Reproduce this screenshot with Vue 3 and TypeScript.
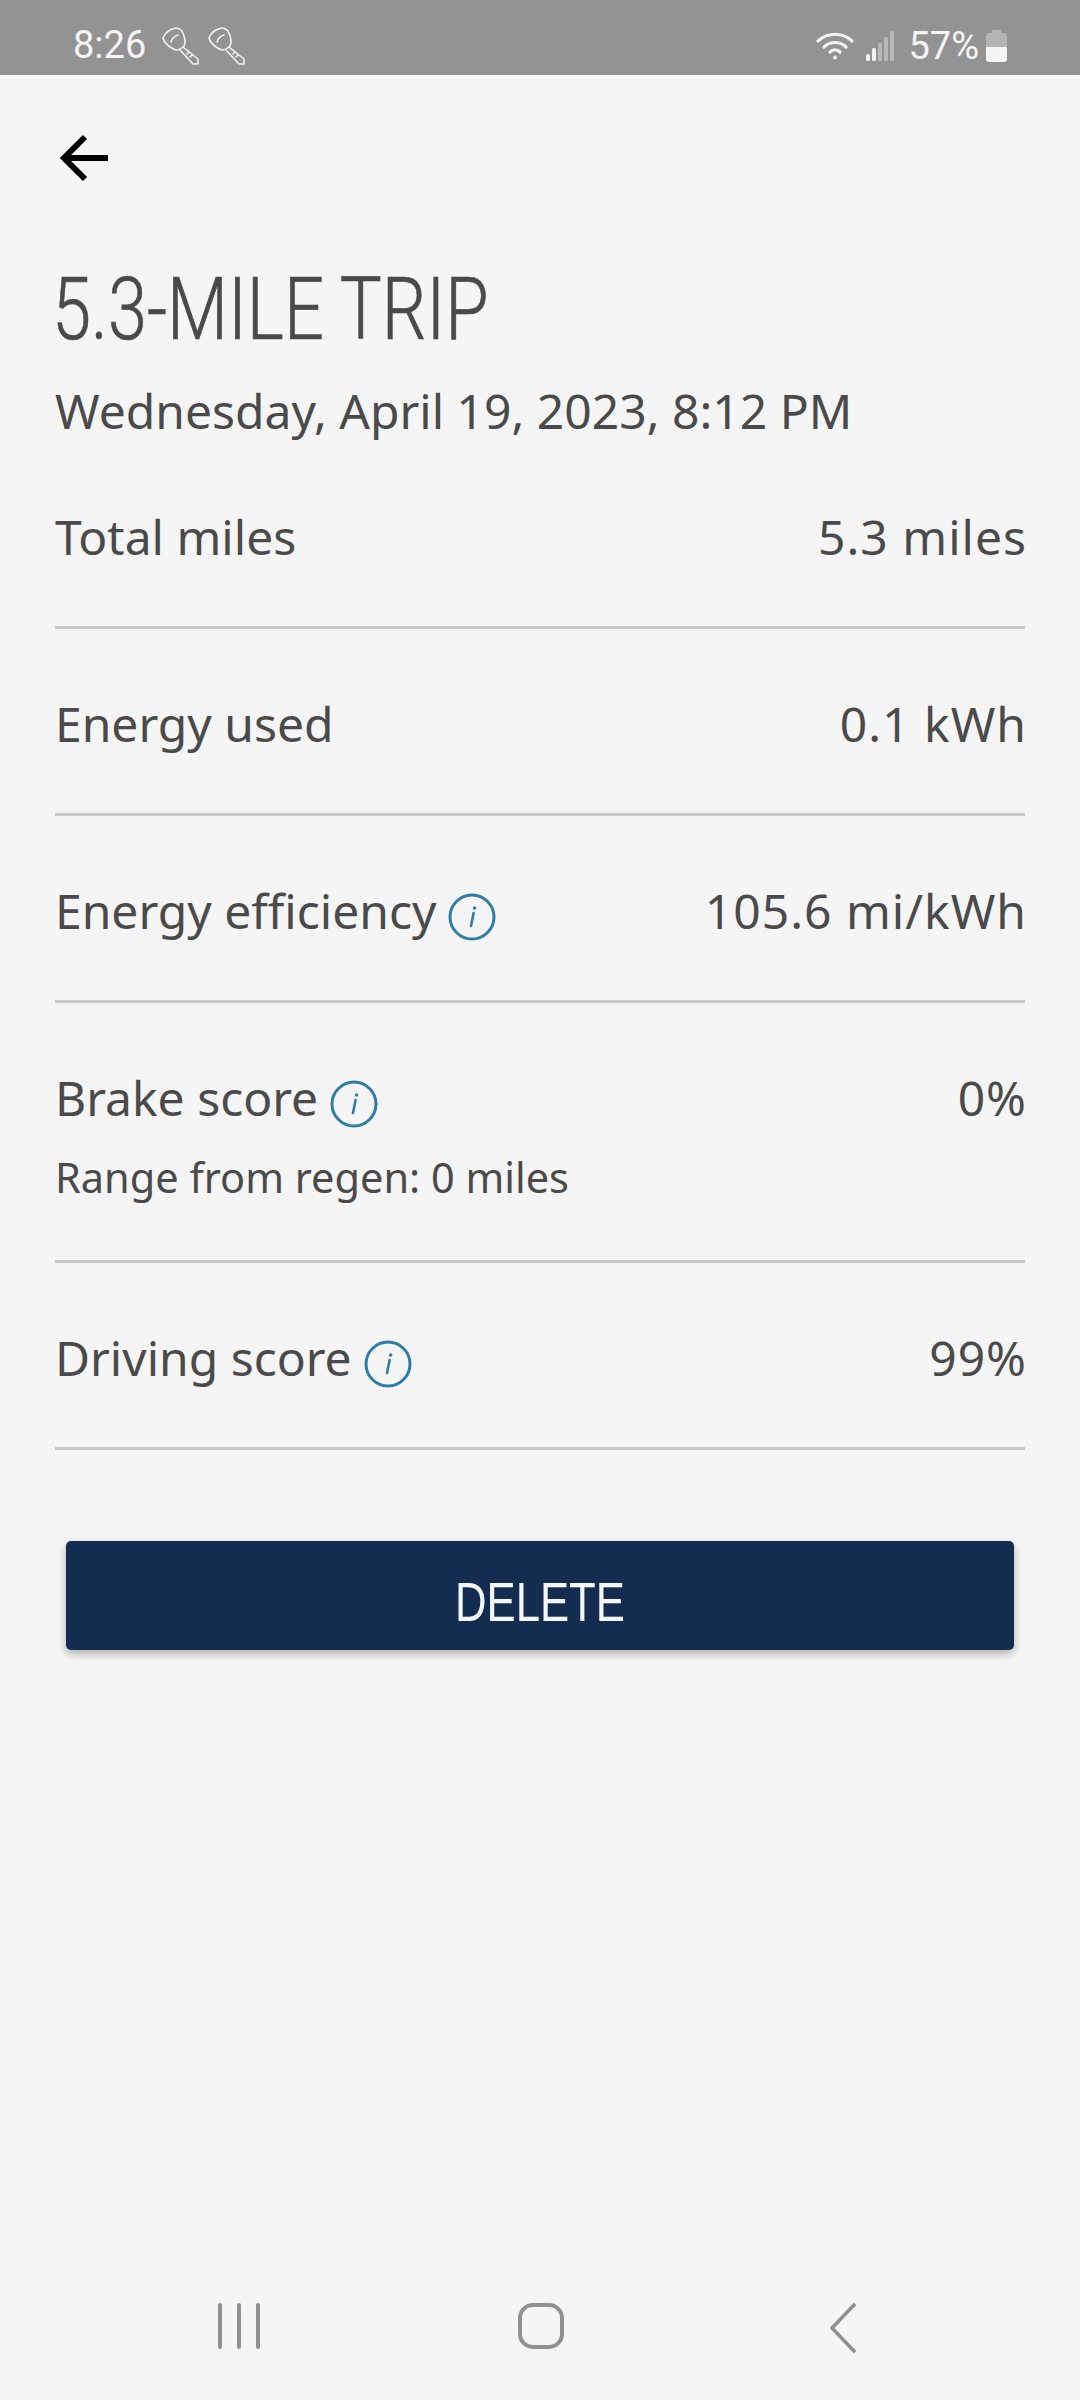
<template>
  <div class="screen">
    <div class="status-bar">
      <div class="status-left">
        <span class="time">8:26</span>
        <svg v-for="n in 2" :key="n" class="key" viewBox="0 0 38 38" width="38" height="38" fill="none" stroke="#f2f2f2" stroke-width="1.6" stroke-linejoin="round" stroke-linecap="round">
          <path d="M14 1 C8 2 3 6 1 11 C2 16 8 21 14 23 C17 23 20 21 22 19 C24 15 22 8 20 4 C18 2 16 1 14 1 Z" />
          <path d="M9 15 C10 11 13 9 16 8" />
          <path d="M21 20 L36 32 V37 H31 L18 23" />
          <path d="M25 27 L27 25 M28 30 L30 28" />
        </svg>
      </div>
      <div class="status-right">
        <svg class="wifi" viewBox="0 0 38 28" width="38" height="28" fill="none" stroke="#f2f2f2" stroke-width="3.2" stroke-linecap="round">
          <path d="M2 9 C12 0 26 0 36 9" />
          <path d="M8 15 C14 9 24 9 30 15" />
          <path d="M14 20 C17 17 21 17 24 20" />
          <circle cx="19" cy="25.5" r="2" fill="#f2f2f2" stroke="none" />
        </svg>
        <svg class="signal" viewBox="0 0 28 30" width="28" height="30">
          <rect x="0" y="23" width="4" height="7" rx="1.5" fill="#f2f2f2" />
          <rect x="6" y="17" width="4" height="13" rx="1.5" fill="#f2f2f2" />
          <rect x="12" y="12" width="4" height="18" rx="1.5" fill="#b8b8b8" />
          <rect x="18" y="6" width="4" height="24" rx="1.5" fill="#b8b8b8" />
          <rect x="24" y="0" width="4" height="30" rx="1.5" fill="#b8b8b8" />
        </svg>
        <span class="percent">57%</span>
        <svg class="battery" viewBox="0 0 21 32" width="21" height="32">
          <path d="M6 0 H15 V3 H18 Q21 3 21 6 V17 H0 V6 Q0 3 3 3 H6 Z" fill="#b4b4b4" />
          <path d="M0 17 H21 V29 Q21 32 18 32 H3 Q0 32 0 29 Z" fill="#f5f5f5" />
        </svg>
      </div>
    </div>

    <main class="content">
      <button class="back" type="button" aria-label="Back">
        <svg viewBox="0 0 50 48" width="50" height="48" fill="none" stroke="#000" stroke-width="6">
          <path d="M49 24 H5" />
          <path d="M26 3 L5 24 L26 45" />
        </svg>
      </button>

      <h1 class="title">5.3-MILE TRIP</h1>
      <p class="date">Wednesday, April 19, 2023, 8:12 PM</p>

      <div v-for="row in rows" :key="row.label" class="row">
        <div class="row-main">
          <span class="label">
            {{ row.label }}
            <svg v-if="row.info" class="info" viewBox="0 0 48 48" width="48" height="48" fill="none">
              <circle cx="24" cy="24" r="22" stroke="#2f7da6" stroke-width="3" />
              <path d="M25.6 20 L23 33" stroke="#2f7da6" stroke-width="2.6" stroke-linecap="round" />
              <circle cx="26.6" cy="15" r="1.8" fill="#2f7da6" />
            </svg>
          </span>
          <span class="value">{{ row.value }}</span>
        </div>
        <div v-if="row.sub" class="sub">{{ row.sub }}</div>
      </div>

      <button class="delete" type="button"><span>DELETE</span></button>
    </main>

    <nav class="nav-bar">
      <div class="nav-cell">
        <svg viewBox="0 0 42 46" width="42" height="46" stroke="#919191" stroke-width="4" stroke-linecap="round">
          <path d="M2 2 V44 M21 2 V44 M40 2 V44" />
        </svg>
      </div>
      <div class="nav-cell">
        <svg viewBox="0 0 46 46" width="46" height="46" fill="none" stroke="#919191" stroke-width="4">
          <rect x="2" y="2" width="42" height="42" rx="13" />
        </svg>
      </div>
      <div class="nav-cell">
        <svg viewBox="0 0 26 50" width="26" height="50" fill="none" stroke="#919191" stroke-width="3.6" stroke-linecap="round">
          <path d="M24 2 L2 25 L24 48" />
        </svg>
      </div>
    </nav>
  </div>
</template>

<script setup lang="ts">
interface TripRow {
  label: string
  value: string
  info?: boolean
  sub?: string
}

const rows: TripRow[] = [
  { label: 'Total miles', value: '5.3 miles' },
  { label: 'Energy used', value: '0.1 kWh' },
  { label: 'Energy efficiency', value: '105.6 mi/kWh', info: true },
  { label: 'Brake score', value: '0%', info: true, sub: 'Range from regen: 0 miles' },
  { label: 'Driving score', value: '99%', info: true }
]
</script>

<style>
body {
  background: #f5f5f5;
}
</style>

<style scoped>
.screen {
  display: flex;
  flex-direction: column;
  height: 2400px;
  background: #f5f5f5;
  font-family: "Noto Sans", sans-serif;
  color: #4a4a4a;
}

.status-bar {
  display: flex;
  justify-content: space-between;
  align-items: center;
  height: 75px;
  padding: 0 73px;
  box-sizing: border-box;
  background: #939393;
  color: #f5f5f5;
  font-family: Roboto, sans-serif;
  font-size: 38px;
}

.status-left,
.status-right {
  display: flex;
  align-items: center;
}

.key {
  margin-left: 8px;
  margin-top: 16px;
}

.time {
  margin-right: 8px;
  margin-top: 14px;
}

.status-right {
  margin-top: 16px;
}

.signal {
  margin-left: 12px;
}

.percent {
  margin-left: 14px;
  margin-right: 7px;
}

.content {
  flex: 1;
  padding: 0 55px;
}

.back {
  display: block;
  width: 50px;
  height: 48px;
  margin: 59px 0 0 4px;
  padding: 0;
  border: 0;
  background: none;
}

.title {
  margin: 79px 0 0 -3px;
  font-family: Roboto, sans-serif;
  font-size: 88px;
  font-weight: 300;
  line-height: 96px;
  white-space: nowrap;
  color: #4a4a4a;
  -webkit-text-stroke: 0.7px #4a4a4a;
  transform: scaleX(0.8);
  transform-origin: left;
}

.date {
  margin: 22px 0 0;
  font-size: 48px;
  line-height: 64px;
}

.row {
  padding: 64px 0 58px;
  border-bottom: 3px solid #c9c9c9;
}

.row:first-of-type {
  padding-top: 63px;
}

.row-main {
  display: flex;
  justify-content: space-between;
  align-items: center;
  font-size: 48px;
  line-height: 62px;
}

.value {
  margin-right: -2px;
  letter-spacing: 1px;
}

.label {
  display: flex;
  align-items: center;
  gap: 12px;
}

.info {
  margin-top: 12px;
}

.sub {
  margin-top: 24px;
  margin-bottom: 1px;
  font-size: 41.5px;
  line-height: 48px;
}

.delete {
  display: block;
  width: 948px;
  height: 109px;
  margin: 91px auto 0;
  padding: 12px 0 0;
  border: 0;
  border-radius: 5px;
  background: #132c4f;
  box-shadow: 0 4px 8px rgba(0, 0, 0, 0.28);
  color: #f4f8fb;
  font-family: "Liberation Sans", sans-serif;
  font-size: 56px;
}

.delete span {
  display: inline-block;
  transform: scaleX(0.78);
}

.nav-bar {
  display: flex;
  height: 150px;
  padding-left: 88px;
}

.nav-cell {
  display: flex;
  justify-content: center;
  width: 302px;
  padding-top: 53px;
}
</style>
